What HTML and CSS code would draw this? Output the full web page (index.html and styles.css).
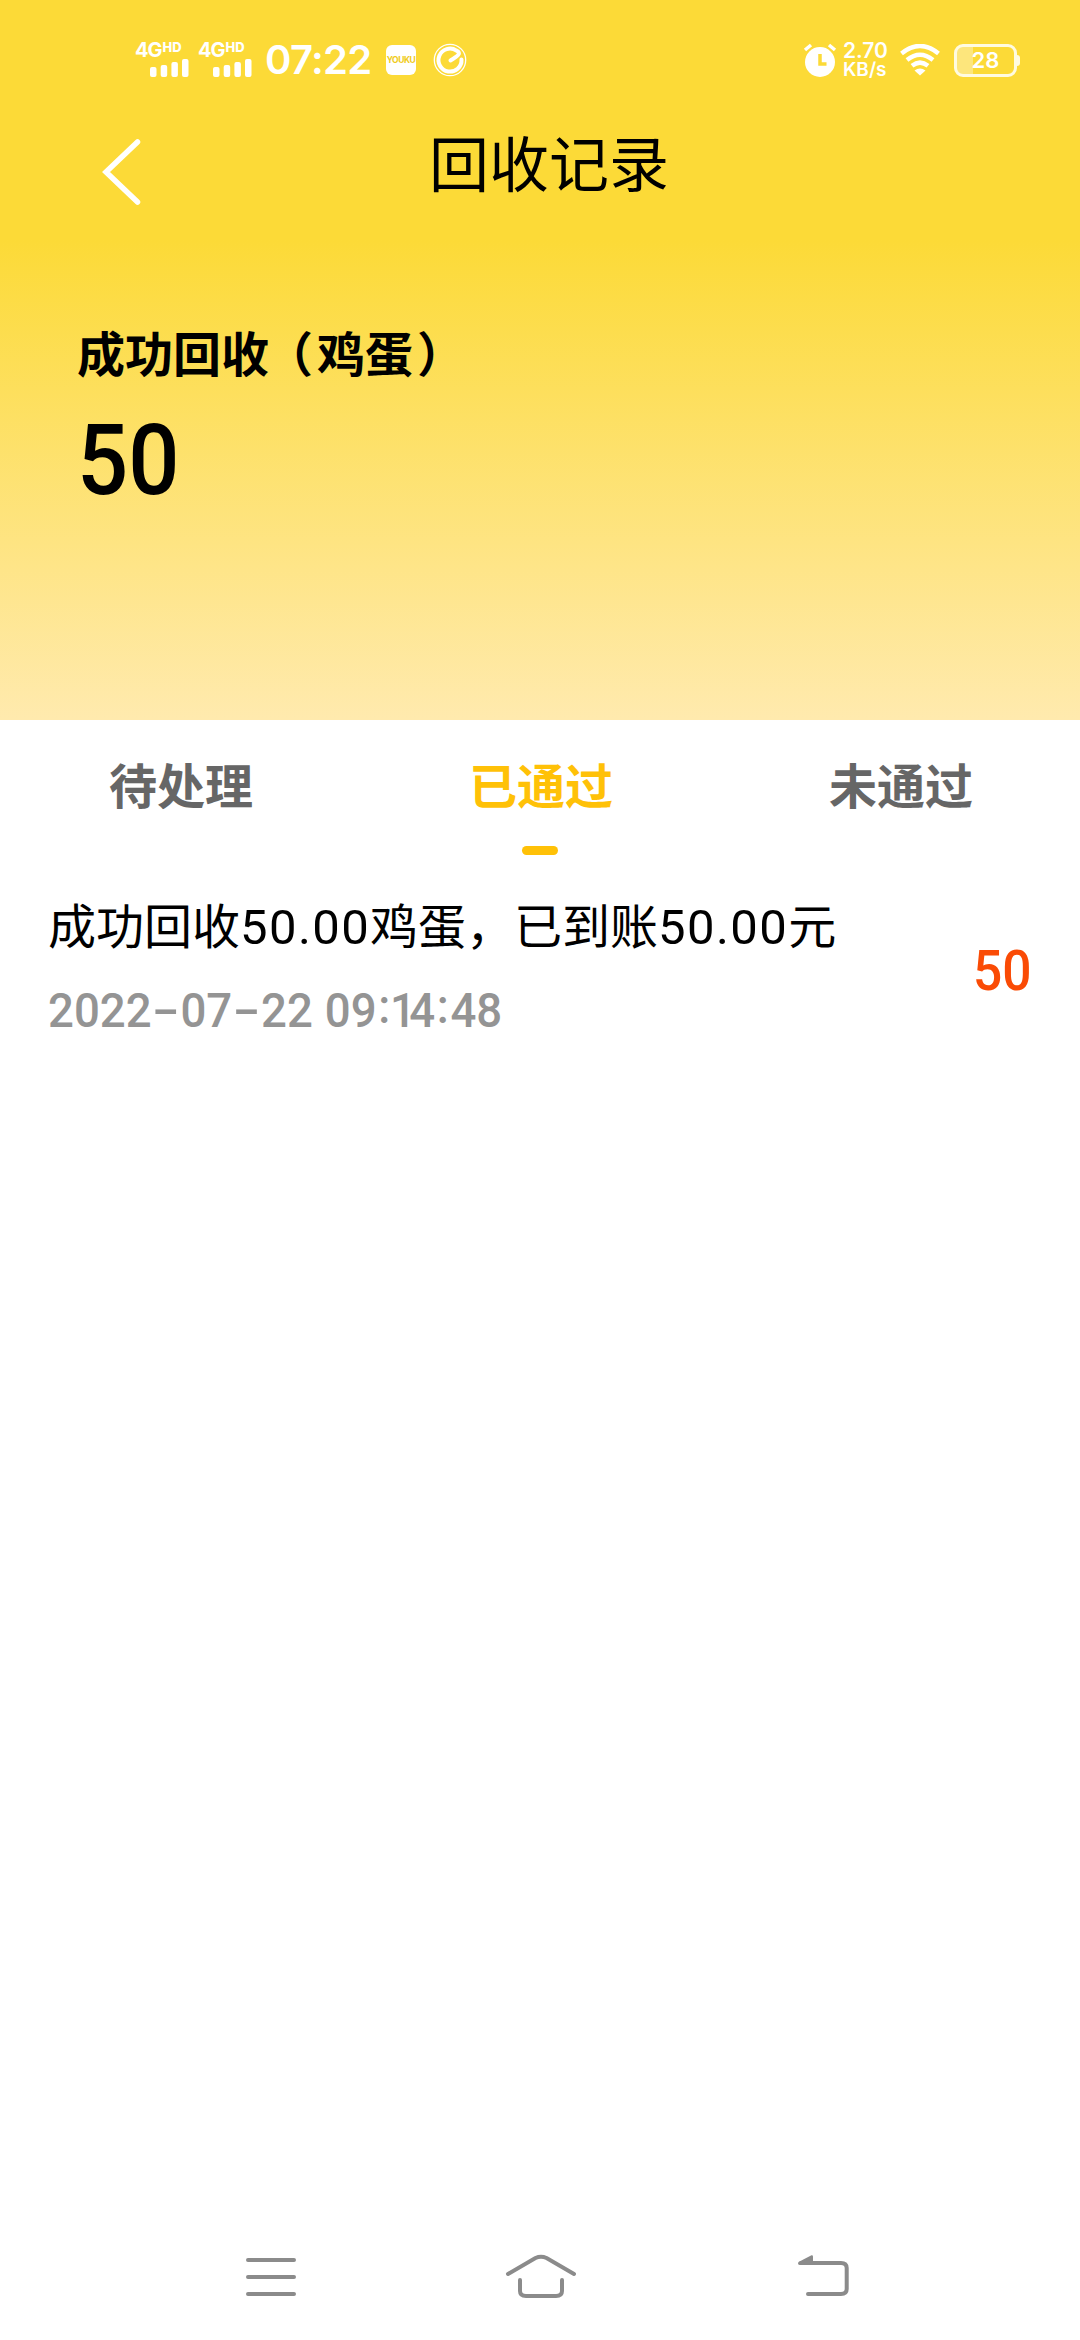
FILE: index.html
```
<!DOCTYPE html>
<html lang="zh-CN">
<head>
<meta charset="utf-8">
<title>回收记录</title>
<link rel="stylesheet" href="styles.css">
</head>
<body>
<div class="screen">
  <header class="hero">
    <div class="status">
      <div class="status-left">
        <div class="signal">
          <div class="net">4G<sup>HD</sup></div>
          <svg class="bars" width="39" height="18" viewBox="0 0 39 18"><rect x="0" y="8" width="6.5" height="10" rx="2"/><rect x="10.7" y="6" width="6.5" height="12" rx="2"/><rect x="21.4" y="3" width="6.5" height="15" rx="2"/><rect x="32" y="0" width="6.5" height="18" rx="2"/></svg>
        </div>
        <div class="signal">
          <div class="net">4G<sup>HD</sup></div>
          <svg class="bars" width="39" height="18" viewBox="0 0 39 18"><rect x="0" y="8" width="6.5" height="10" rx="2"/><rect x="10.7" y="6" width="6.5" height="12" rx="2"/><rect x="21.4" y="3" width="6.5" height="15" rx="2"/><rect x="32" y="0" width="6.5" height="18" rx="2"/></svg>
        </div>
        <div class="clock">07:22</div>
        <div class="youku">YOUKU</div>
        <svg class="ering" width="34" height="34" viewBox="0 0 34 34" fill="none" stroke="#fff"><circle cx="17" cy="17" r="15.7" stroke-width="1.3"/><path d="M28.5 16.5A11.5 11.5 0 1 1 23.5 7.6C28.5 10 25.5 12.500 17.500 17.500" stroke-width="4" stroke-linecap="round" stroke-linejoin="round"/></svg>
      </div>
      <div class="status-right">
        <svg width="34" height="36" viewBox="0 0 34 36"><path d="M2 8L8 3M32 8L26 3" stroke="#fff" stroke-width="3.500" fill="none"/><circle cx="17" cy="20" r="15" fill="#fff"/><path d="M17 12V22H23.500" stroke="#fcda37" stroke-width="3.500" fill="none"/></svg>
        <div class="speed"><span>2.70</span><span class="unit">KB/s</span></div>
        <svg class="wifi" width="40" height="32" viewBox="0 0 40 32"><g fill="none" stroke="#fff" stroke-width="4.5"><path d="M1.500 9.500Q20-5.500 38.500 9.500"/><path d="M7 16Q20 5.500 33 16"/><path d="M12 21.800Q20 15.500 28 21.800"/></g><path d="M14.500 26.500Q20 22.500 25.500 26.500L20 31.500Z" fill="#fff"/></svg>
        <div class="battery"><span>28</span></div>
        <i class="nub"></i>
      </div>
    </div>
    <div class="titlebar">
      <svg class="back" width="40" height="68" viewBox="0 0 40 68"><path d="M36.500 4L5 34L36.500 64" fill="none" stroke="#fff" stroke-width="5.5" stroke-linecap="round"/></svg>
      <h1 class="title">回收记录</h1>
    </div>
    <div class="summary">
      <div class="summary-label">成功回收<span class="paren-open">（</span>鸡蛋<span class="paren-close">）</span></div>
      <div class="summary-value">50</div>
    </div>
  </header>
  <nav class="tabs">
    <div class="tab">待处理</div>
    <div class="tab active">已通过</div>
    <div class="tab">未通过</div>
  </nav>
  <main class="list">
    <div class="record">
      <div class="record-main">
        <div class="record-title">成功回收<span class="num">50.00</span>鸡蛋，已到账<span class="num">50.00</span>元</div>
        <div class="record-time">2022<span class="dash">-</span>07<span class="dash">-</span>22 09<span class="colon">:</span><span class="tight">14</span><span class="colon">:</span>48</div>
      </div>
      <div class="record-amount">50</div>
    </div>
  </main>
  <footer class="sysnav">
    <svg width="60" height="60" viewBox="241 2246 60 60"><path d="M248 2260H294M248 2277H294M248 2294H294"/></svg>
    <svg class="home" width="80" height="60" viewBox="501 2246 80 60"><path d="M508 2274L535.500 2258Q541 2255.500 546.500 2258L574 2274M520 2280V2291Q520 2296 526 2296H556Q562 2296 562 2291V2280"/></svg>
    <svg class="return" width="60" height="60" viewBox="793 2246 60 60"><path d="M801 2263H841Q846.700 2263 846.700 2268V2289Q846.700 2294 841 2294H808"/><path class="solid" d="M798.500 2262L811.500 2255.200Q813 2255 813 2256.500V2265H800Q797 2264.500 798.500 2262Z"/></svg>
  </footer>
</div>
</body>
</html>
```
FILE: styles.css
```
* { box-sizing: border-box; }
body { margin: 0; background: #fff; }
.screen {
  width: 1080px; height: 2340px;
  display: flex; flex-direction: column;
  font-family: "Noto Sans CJK SC", sans-serif;
  color: #000; background: #fff;
}
svg { display: block; flex: none; }
.hero {
  height: 720px; flex: none;
  background: linear-gradient(#fcda37 0, #fcda37 240px, #ffeaae 720px);
}
.status {
  height: 120px; display: flex; justify-content: space-between; align-items: center;
  padding: 0 60px 0 135px; color: #fff; font-family: Inter, sans-serif; font-weight: 600;
}
.status-left, .status-right { display: flex; align-items: center; }
.signal { width: 63px; height: 36px; }
.net { height: 17px; line-height: 17px; font-size: 20px; font-weight: 700; letter-spacing: -1px; white-space: nowrap; }
.net sup { font-size: 13px; font-weight: 800; line-height: 0; vertical-align: 5px; letter-spacing: 0; margin-left: 1px; }
.bars { margin-left: 15px; fill: #fff; }
.clock { width: 106px; margin-left: 4px; font-size: 40px; line-height: 40px; letter-spacing: -0.7px; }
.youku {
  width: 30px; height: 30px; margin-left: 15px; border-radius: 6px; background: #fff;
  color: #f0cb20; font-size: 8.5px; font-weight: 700; line-height: 31px; text-align: center; letter-spacing: -0.5px;
}
.ering { margin-left: 17px; }
.speed { width: 46px; margin-left: 6px; display: flex; flex-direction: column; font-size: 21px; line-height: 19px; }
.speed .unit { font-size: 19px; }
.wifi { margin-left: 11px; }
.battery {
  width: 63px; height: 33px; margin-left: 14px; border: 3px solid #fffbe0; border-radius: 9px;
  background: linear-gradient(90deg, #fde67c 16px, transparent 16px);
  font-size: 22px; line-height: 27px; text-align: center;
}
.nub { width: 3px; height: 11px; border-radius: 0 3px 3px 0; background: #fffbe0; }
.titlebar { height: 120px; display: flex; padding-left: 101px; }
.back { margin-top: 18px; }
.title { width: 244px; margin: 0 0 0 288px; font-size: 60px; font-weight: 400; line-height: 81px; }
.summary { padding: 76px 77px 0; }
.summary-label { font-size: 48px; line-height: 70px; font-weight: 700; white-space: nowrap; }
.paren-open { margin: 0 4px 0 -4px; }
.paren-close { margin-left: 4px; }
.summary-value {
  margin-top: 25px; font: 500 98px/100px Roboto, sans-serif;
  transform: scaleX(0.92); transform-origin: 0 50%;
}
.tabs { height: 150px; flex: none; display: grid; grid-template-columns: repeat(3, 1fr); }
.tab {
  display: flex; flex-direction: column; align-items: center; padding: 28px 0 0 2px;
  font-size: 48px; line-height: 70px; font-weight: 700; color: #666;
}
.tab.active { color: #ffc107; }
.tab.active::after { content: ""; width: 36px; height: 9px; margin: 28px 2px 0 0; border-radius: 5px; background: #ffc107; }
.list { flex: 1; }
.record { display: flex; justify-content: space-between; align-items: center; height: 193px; padding: 0 48px; }
.record-title { height: 70px; font-size: 48px; line-height: 70px; white-space: nowrap; }
.num { font-family: Roboto, sans-serif; font-size: 49px; letter-spacing: 1.4px; line-height: 1; }
.record-time {
  height: 70px; margin-top: 18px; font: 500 49px/70px Roboto, sans-serif;
  color: #949494; white-space: nowrap; word-spacing: 0.7px;
  transform: scaleX(0.93); transform-origin: 0 50%;
}
.dash { display: inline-block; width: 31px; font-family: Inter, sans-serif; text-align: center; line-height: 1; transform: scaleX(1.4); }
.colon { display: inline-block; width: 16.3px; text-align: center; vertical-align: 4px; line-height: 1; }
.tight { letter-spacing: -7px; margin: 0 7px 0 -2px; }
.record-amount { margin-top: 8px; font: 500 56px/70px Roboto, sans-serif; color: #fa4b05; transform: scaleX(0.92); transform-origin: 100% 50%; }
.sysnav { height: 128px; flex: none; display: flex; align-items: center; padding-left: 241px; }
.home { margin-left: 200px; }
.return { margin-left: 212px; }
.sysnav path { fill: none; stroke: #8b8b8b; stroke-width: 4; stroke-linecap: round; stroke-linejoin: round; }
.sysnav .solid { fill: #8b8b8b; stroke: none; }
```
